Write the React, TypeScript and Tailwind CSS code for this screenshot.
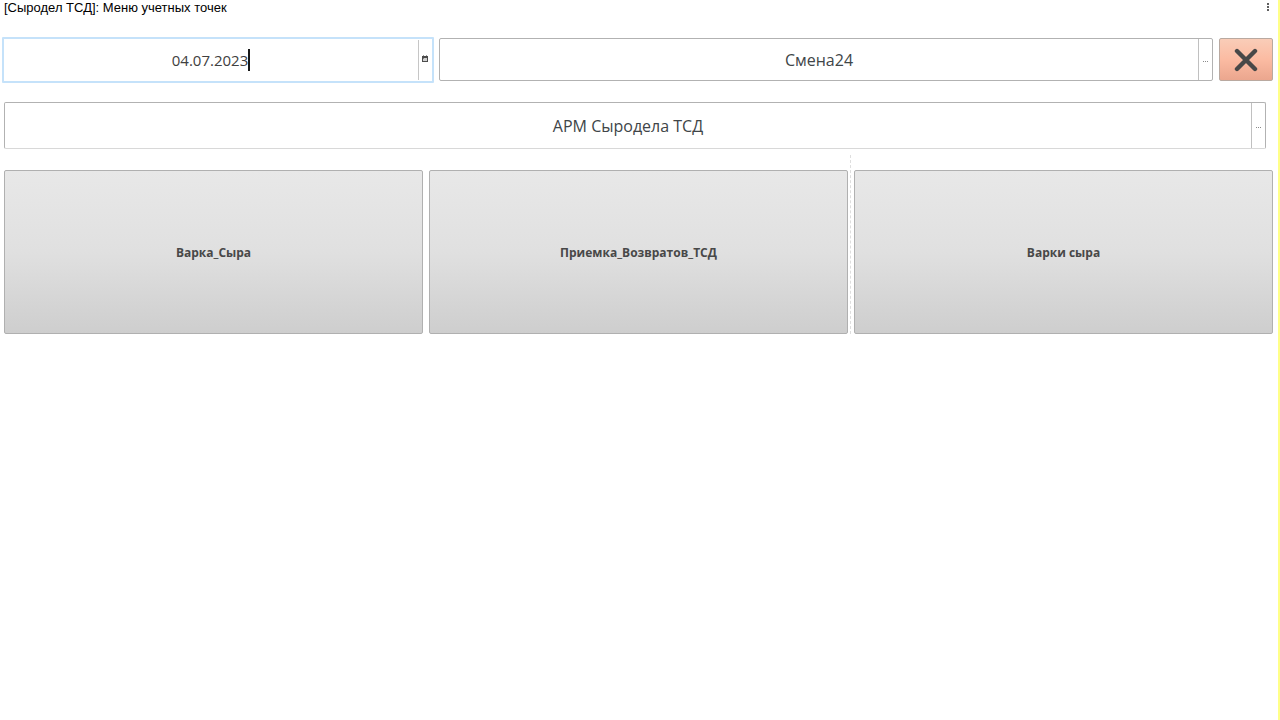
import React from "react";

function Dots() {
  return (
    <svg width="6" height="2" viewBox="0 0 6 2" fill="#8a8a8a" aria-hidden="true">
      <rect x="0" y="0" width="1" height="1" />
      <rect x="2" y="0" width="1" height="1" />
      <rect x="4" y="0" width="1" height="1" />
    </svg>
  );
}

function CalendarIcon() {
  return (
    <svg width="6" height="7" viewBox="0 0 6 7" aria-hidden="true">
      <path d="M0 1h6v6H0z" fill="#4c4c4c" />
      <path d="M1 0h1v1H1zM4 0h1v1H4z" fill="#9a9a9a" />
      <rect x="1" y="3" width="4" height="3" fill="#d0d0d0" />
      <rect x="1" y="3" width="1" height="1" fill="#808080" />
    </svg>
  );
}

function DateField() {
  return (
    <div className="flex h-[46px] rounded-[1px] border-2 border-[#c5e2fa] bg-white py-px">
      <label className="flex min-w-0 flex-1 items-center justify-center border-r border-[#c6c6c6]">
        <input
          aria-label="Дата"
          defaultValue="04.07.2023"
          className="min-w-0 bg-transparent text-[15px] leading-6 text-[#404040] caret-transparent outline-none [field-sizing:content]"
        />
        <span className="h-[22px] w-[2px] bg-[#181818]" />
      </label>
      <button type="button" aria-label="Выбрать дату" className="flex w-[13px] items-center justify-start pb-1 pl-[3px]">
        <CalendarIcon />
      </button>
    </div>
  );
}

type LookupProps = { label: string; value: string; className: string };

function LookupField({ label, value, className }: LookupProps) {
  return (
    <div className={`flex rounded-[2px] border border-[#b2b2b2] bg-white ${className}`}>
      <input
        aria-label={label}
        defaultValue={value}
        className="min-w-0 flex-1 bg-transparent text-center text-[16px] leading-6 text-[#404548] outline-none"
      />
      <button
        type="button"
        aria-label={`${label}: выбрать`}
        className="flex w-[14px] items-center justify-center border-l border-[#c0c0c0] pt-1"
      >
        <Dots />
      </button>
    </div>
  );
}

const points = ["Варка_Сыра", "Приемка_Возвратов_ТСД", "Варки сыра"];

export default function App() {
  return (
    <div className="min-h-screen border-r-2 border-[#ffff88] bg-white font-['Open_Sans','Noto_Sans',sans-serif]">
      <header className="flex h-[37px] items-start justify-between pr-[9px] pl-1">
        <h1 className="font-['Liberation_Sans',sans-serif] text-[13px] leading-4 text-black">
          [Сыродел ТСД]: Меню учетных точек
        </h1>
        <button type="button" aria-label="Меню" className="pt-[3px]">
          <svg width="2" height="8" viewBox="0 0 2 8" fill="#606060" aria-hidden="true">
            <rect x="0" y="0" width="2" height="2" />
            <rect x="0" y="3" width="2" height="2" />
            <rect x="0" y="6" width="2" height="2" />
          </svg>
        </button>
      </header>
      <main className="pr-[5px]">
        <div className="grid grid-cols-[432fr_774fr_55px] items-start gap-[5px] pl-[2px]">
          <DateField />
          <LookupField label="Смена" value="Смена24" className="mt-px h-[43px]" />
          <button
            type="button"
            aria-label="Закрыть"
            className="mt-px ml-px flex h-[43px] items-center justify-center rounded-[2px] border border-[#b9a9a0] bg-linear-to-b from-[#f9cdb8] via-[#fbbba2] to-[#eba68e]"
          >
            <svg width="24" height="24" viewBox="0 0 24 24" aria-hidden="true">
              <path d="M3 3L21 21M21 3L3 21" stroke="#484848" strokeWidth="4.4" strokeLinecap="round" />
            </svg>
          </button>
        </div>
        <div className="mt-[19px] mr-[7px] ml-1">
          <LookupField label="Рабочее место" value="АРМ Сыродела ТСД" className="h-[47px] border-b-[#d8d8d8]" />
        </div>
        <div className="relative mt-[21px] ml-1">
          <div className="grid grid-cols-3 gap-[6px]">
            {points.map((name) => (
              <button
                key={name}
                type="button"
                className="h-[164px] rounded-[2px] border border-[#b0b0b0] bg-linear-to-b from-[#e8e8e8] via-[#e0e0e0] to-[#cecece] pt-[2px] text-[12px] font-bold text-[#484848]"
              >
                {name}
              </button>
            ))}
          </div>
          <div className="pointer-events-none absolute -top-[15px] bottom-0 left-2/3 border-l border-dashed border-[#dedede]" />
        </div>
      </main>
    </div>
  );
}
